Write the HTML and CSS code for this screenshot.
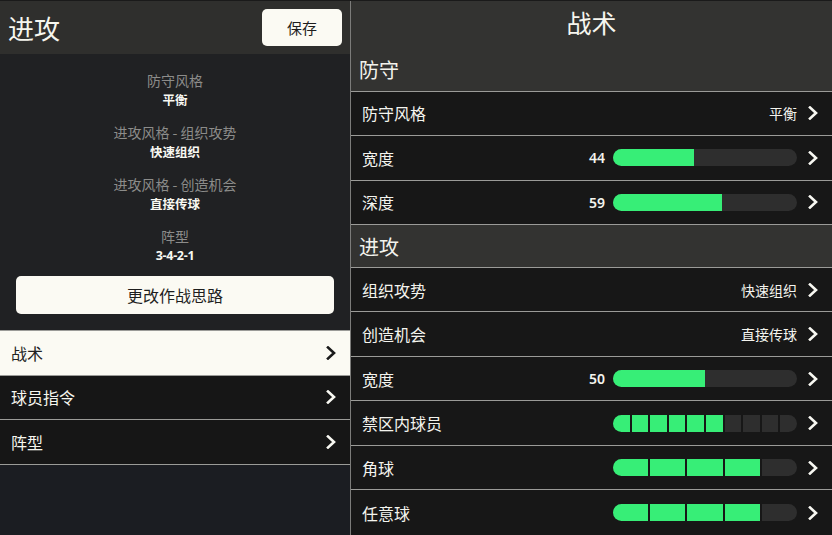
FILE: index.html
```html
<!DOCTYPE html>
<html lang="zh-CN">
<head>
<meta charset="utf-8">
<title>战术</title>
<link rel="stylesheet" href="styles.css">
</head>
<body>
<div class="app">
  <aside class="left">
    <header class="left-head">
      <h1 class="left-title">进攻</h1>
      <button class="save-btn">保存</button>
    </header>
    <section class="info">
      <div class="info-item"><div class="info-label">防守风格</div><div class="info-value">平衡</div></div>
      <div class="info-item"><div class="info-label">进攻风格 - 组织攻势</div><div class="info-value">快速组织</div></div>
      <div class="info-item"><div class="info-label">进攻风格 - 创造机会</div><div class="info-value">直接传球</div></div>
      <div class="info-item"><div class="info-label">阵型</div><div class="info-value num">3-4-2-1</div></div>
      <button class="change-btn">更改作战思路</button>
    </section>
    <nav class="menu">
      <div class="menu-row active"><span>战术</span><svg class="chev" viewBox="0 0 10 14"><polyline points="2,1.5 8,7 2,12.5"/></svg></div>
      <div class="menu-row"><span>球员指令</span><svg class="chev" viewBox="0 0 10 14"><polyline points="2,1.5 8,7 2,12.5"/></svg></div>
      <div class="menu-row"><span>阵型</span><svg class="chev" viewBox="0 0 10 14"><polyline points="2,1.5 8,7 2,12.5"/></svg></div>
    </nav>
    <div class="left-fill"></div>
  </aside>
  <main class="right">
    <div class="right-title">战术</div>
    <div class="section">防守</div>
    <div class="row"><span class="label">防守风格</span><div class="rt"><span class="val">平衡</span><svg class="chev" viewBox="0 0 10 14"><polyline points="2,1.5 8,7 2,12.5"/></svg></div></div>
    <div class="row"><span class="label">宽度</span><div class="rt"><span class="num-val">44</span><div class="bar"><div class="fill" style="width:44%"></div></div><svg class="chev" viewBox="0 0 10 14"><polyline points="2,1.5 8,7 2,12.5"/></svg></div></div>
    <div class="row"><span class="label">深度</span><div class="rt"><span class="num-val">59</span><div class="bar"><div class="fill" style="width:59%"></div></div><svg class="chev" viewBox="0 0 10 14"><polyline points="2,1.5 8,7 2,12.5"/></svg></div></div>
    <div class="section">进攻</div>
    <div class="row"><span class="label">组织攻势</span><div class="rt"><span class="val">快速组织</span><svg class="chev" viewBox="0 0 10 14"><polyline points="2,1.5 8,7 2,12.5"/></svg></div></div>
    <div class="row"><span class="label">创造机会</span><div class="rt"><span class="val">直接传球</span><svg class="chev" viewBox="0 0 10 14"><polyline points="2,1.5 8,7 2,12.5"/></svg></div></div>
    <div class="row"><span class="label">宽度</span><div class="rt"><span class="num-val">50</span><div class="bar"><div class="fill" style="width:50%"></div></div><svg class="chev" viewBox="0 0 10 14"><polyline points="2,1.5 8,7 2,12.5"/></svg></div></div>
    <div class="row"><span class="label">禁区内球员</span><div class="rt"><div class="seg-bar"><i class="on"></i><i class="on"></i><i class="on"></i><i class="on"></i><i class="on"></i><i class="on"></i><i></i><i></i><i></i><i></i></div><svg class="chev" viewBox="0 0 10 14"><polyline points="2,1.5 8,7 2,12.5"/></svg></div></div>
    <div class="row"><span class="label">角球</span><div class="rt"><div class="seg-bar"><i class="on"></i><i class="on"></i><i class="on"></i><i class="on"></i><i></i></div><svg class="chev" viewBox="0 0 10 14"><polyline points="2,1.5 8,7 2,12.5"/></svg></div></div>
    <div class="row"><span class="label">任意球</span><div class="rt"><div class="seg-bar"><i class="on"></i><i class="on"></i><i class="on"></i><i class="on"></i><i></i></div><svg class="chev" viewBox="0 0 10 14"><polyline points="2,1.5 8,7 2,12.5"/></svg></div></div>
  </main>
</div>
</body>
</html>
```

FILE: styles.css
```css
* { box-sizing: border-box; }
html, body { margin: 0; padding: 0; }
body {
  width: 832px;
  height: 535px;
  overflow: hidden;
  background: #1a1a1a;
  font-family: "Noto Sans CJK SC", "Noto Sans", sans-serif;
  color: #f4f4ee;
}
.app {
  display: flex;
  height: 535px;
  padding-top: 1px;
  background: #1a1a1a;
}
.left {
  width: 350px;
  display: flex;
  flex-direction: column;
}
.left-head {
  height: 53px;
  background: #2f2f2d;
  display: flex;
  align-items: center;
  justify-content: space-between;
  padding: 0 8px 0 8px;
}
.left-title {
  margin: 0;
  font-weight: 400;
  font-size: 26px;
  line-height: 30px;
  color: #f6f6ef;
}
.save-btn {
  width: 80px;
  height: 37px;
  border: none;
  border-radius: 5px;
  background: #fbfaf3;
  color: #1e1e1e;
  font-family: inherit;
  font-size: 15px;
  padding: 0;
}
.info {
  background: #202123;
  padding: 17px 16px 16px;
  display: flex;
  flex-direction: column;
  align-items: center;
}
.info-item {
  text-align: center;
  margin-bottom: 15px;
}
.info-item:nth-child(4) { margin-bottom: 12px; }
.info-label {
  font-size: 14px;
  line-height: 18px;
  color: #8c8c8a;
}
.info-value {
  margin-top: 2px;
  font-size: 12.5px;
  line-height: 17px;
  font-weight: 700;
  color: #f8f8f2;
}
.info-value.num { font-family: "Noto Sans", sans-serif; letter-spacing: -0.3px; }
.change-btn {
  width: 318px;
  height: 38px;
  border: none;
  border-radius: 5px;
  background: #fbfaf3;
  color: #1e1e1e;
  font-family: inherit;
  font-size: 16px;
  padding: 0;
}
.menu {
  border-top: 1px solid #9b9b98;
}
.menu-row {
  height: 44.5px;
  border-bottom: 1px solid #9b9b98;
  background: #161616;
  display: flex;
  align-items: center;
  justify-content: space-between;
  padding: 0 14px 0 11px;
  font-size: 16px;
  color: #f6f6ef;
}
.menu-row.active {
  background: #fbfaf3;
  color: #222;
}
.menu-row.active .chev polyline { stroke: #1a1a1a; }
.left-fill {
  flex: 1;
  background: #1b1d22;
}
.right {
  width: 482px;
  border-left: 1px solid #7c7c7a;
  background: #171717;
  display: flex;
  flex-direction: column;
}
.right-title {
  height: 48px;
  background: #333331;
  text-align: center;
  font-size: 25px;
  line-height: 30px;
  padding-top: 6px;
  color: #f6f6ef;
}
.section {
  height: 43px;
  background: #333331;
  border-bottom: 1px solid #9b9b98;
  display: flex;
  align-items: center;
  padding-left: 8px;
  font-size: 20px;
  color: #f2f2ec;
}
.row {
  height: 44.5px;
  flex: none;
  border-bottom: 1px solid #9b9b98;
  display: flex;
  align-items: center;
  justify-content: space-between;
  padding: 0 14px 0 11px;
  background: #171717;
}
.row:last-child { border-bottom: none; }
.label {
  font-size: 16px;
  color: #f4f4ee;
}
.rt {
  display: flex;
  align-items: center;
}
.val {
  font-size: 14px;
  color: #f4f4ee;
  margin-right: 11px;
}
.num-val {
  font-family: "Noto Sans", sans-serif;
  font-weight: 600;
  font-size: 14px;
  margin-right: 8px;
  color: #f4f4ee;
}
.bar {
  width: 184px;
  height: 17px;
  border-radius: 9px;
  background: #2e2e2e;
  overflow: hidden;
  margin-right: 11px;
}
.fill {
  height: 100%;
  background: #37ee77;
}
.seg-bar {
  width: 184px;
  height: 17px;
  border-radius: 9px;
  overflow: hidden;
  display: flex;
  gap: 2px;
  margin-right: 11px;
}
.seg-bar i {
  flex: 1;
  background: #2e2e2e;
}
.seg-bar i.on { background: #37ee77; }
.chev {
  width: 10px;
  height: 14px;
  flex: none;
}
.chev polyline {
  fill: none;
  stroke: #f8f8f2;
  stroke-width: 2.6;
  stroke-linecap: square;
  stroke-linejoin: miter;
}
```
